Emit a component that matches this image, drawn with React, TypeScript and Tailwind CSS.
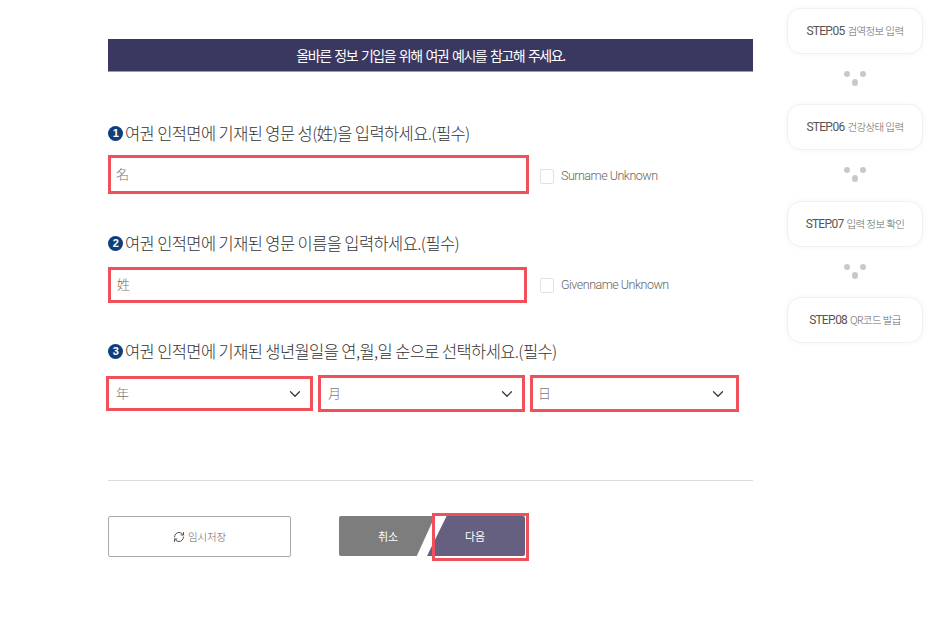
import { ChevronDown, RefreshCw } from "lucide-react";

const sans = "font-['Noto_Sans_CJK_KR','Noto_Sans',sans-serif]";

function Num({ n }: { n: number }) {
    return (
        <span className="flex w-[15px] h-[15px] shrink-0 items-center justify-center rounded-full bg-[#0d3f7d] text-white text-[11px] font-bold leading-none font-['Liberation_Sans',sans-serif]">
            {n}
        </span>
    );
}

function Label({ n, children }: { n: number; children: React.ReactNode }) {
    return (
        <div className="flex h-[26px] items-center gap-[2px] text-[16.5px] font-light tracking-[-0.6px] text-[#333] leading-none whitespace-nowrap">
            <Num n={n} />
            <span>{children}</span>
        </div>
    );
}

function Unknown({ text, className }: { text: string; className?: string }) {
    return (
        <label className={`flex items-center gap-[7px] text-[12.5px] font-light tracking-[-0.5px] text-[#666] whitespace-nowrap font-['Roboto',sans-serif] ${className ?? ""}`}>
            <span className="w-[14px] h-[15px] rounded-[2px] border border-[#e2e2e2] bg-white" />
            {text}
        </label>
    );
}

function DateSelect({ text, className }: { text: string; className: string }) {
    return (
        <div className={`flex items-center justify-between border-[3px] border-[#f0505a] text-[13px] font-light text-[#777] ${className}`}>
            <span className="pb-[2px]">{text}</span>
            <ChevronDown size={18} strokeWidth={1.6} className="text-[#333]" />
        </div>
    );
}

function Step({ no, text }: { no: string; text: string }) {
    return (
        <div className="flex h-[46px] items-center justify-center gap-[3px] rounded-[14px] border border-[#f0f0f0] bg-white shadow-[0_0_6px_rgba(0,0,0,0.04)] whitespace-nowrap">
            <span className="text-[12px] tracking-[-0.8px] text-[#555] font-['Roboto',sans-serif]">{no}</span>
            <span className="text-[10.5px] font-light tracking-[-0.6px] text-[#666]">{text}</span>
        </div>
    );
}

function Dots() {
    return (
        <div className="relative h-[50.33px] w-full">
            <span className="absolute left-[57px] top-[17px] w-[6px] h-[6px] rounded-full bg-[#c9c9c9]" />
            <span className="absolute left-[73px] top-[17px] w-[6px] h-[6px] rounded-full bg-[#c9c9c9]" />
            <span className="absolute left-[65px] top-[25px] w-[6px] h-[7px] rounded-full bg-[#c9c9c9]" />
        </div>
    );
}

export default function App() {
    return (
        <main className={`relative flex w-[950px] h-[633px] overflow-hidden bg-white ${sans}`}>
            <div className="ml-[108px] w-[645px] pt-[39px]">
                {/* Notice bar */}
                <div className="flex h-[33px] items-center justify-center border-b border-[#9a98b5] bg-[#3a3760] text-[14px] font-normal tracking-[-1.45px] [word-spacing:2px] text-white">
                    올바른 정보 기입을 위해 여권 예시를 참고해 주세요.
                </div>

                <div className="mt-[48px]">
                    <Label n={1}>여권 인적면에 기재된 영문 성(姓)을 입력하세요.(필수)</Label>
                </div>
                <div className="mt-[9px] flex items-center gap-[11px]">
                    <div className="flex h-[39px] w-[421px] items-center border-[3px] border-[#f0505a] pb-[2px] pl-[5px] text-[13px] font-light text-[#777]">名</div>
                    <Unknown text="Surname Unknown" className="mt-[3px]" />
                </div>

                <div className="mt-[36px]">
                    <Label n={2}>여권 인적면에 기재된 영문 이름을 입력하세요.(필수)</Label>
                </div>
                <div className="mt-[11px] flex items-center gap-[13px]">
                    <div className="flex h-[36px] w-[419px] items-center border-[3px] border-[#f0505a] pb-[2px] pl-[6px] text-[13px] font-light text-[#8a6a55]">姓</div>
                    <Unknown text="Givenname Unknown" />
                </div>

                <div className="mt-[35px]">
                    <Label n={3}>여권 인적면에 기재된 생년월일을 연,월,일 순으로 선택하세요.(필수)</Label>
                </div>
                <div className="mt-[11px] -ml-[2px] flex items-start gap-[5px]">
                    <DateSelect text="年" className="mt-[1px] h-[35px] w-[207px] pl-[7px] pr-[6px]" />
                    <DateSelect text="月" className="h-[37px] w-[207px] pl-[7px] pr-[6px]" />
                    <DateSelect text="日" className="h-[37px] w-[209px] pl-[5px] pr-[9px]" />
                </div>

                <div className="mt-[68px] border-t border-[#ddd]" />

                {/* Buttons */}
                <div className="relative mt-[35px] flex items-start">
                    <button className="flex h-[41px] w-[183px] items-center justify-center gap-[3px] rounded-[2px] border border-[#aaa] bg-white text-[10.5px] font-light tracking-[-0.2px] text-[#666]">
                        <RefreshCw size={12} strokeWidth={2} className="text-[#555]" />
                        임시저장
                    </button>
                    <button className="ml-[48px] flex h-[40px] w-[96px] items-center justify-center rounded-l-[2px] bg-[#7d7d7d] pl-[2px] text-[11px] font-normal text-white [clip-path:polygon(0_0,100%_0,81%_100%,0_100%)]">
                        취소
                    </button>
                    <button className="-ml-[8px] flex h-[40px] w-[98px] items-center justify-center rounded-r-[2px] bg-[#656080] pr-[2px] text-[11px] font-normal text-white [clip-path:polygon(20%_0,100%_0,100%_100%,0_100%)]">
                        다음
                    </button>
                    <div className="absolute left-[324px] -top-[3px] h-[48px] w-[97px] border-[3px] border-[#f0505a]" />
                </div>
            </div>

            {/* Step list */}
            <aside className="ml-[34px] w-[136px] pt-[8px]">
                <Step no="STEP.05" text="검역정보 입력" />
                <Dots />
                <Step no="STEP.06" text="건강상태 입력" />
                <Dots />
                <Step no="STEP.07" text="입력 정보 확인" />
                <Dots />
                <Step no="STEP.08" text="QR코드 발급" />
            </aside>
        </main>
    );
}
